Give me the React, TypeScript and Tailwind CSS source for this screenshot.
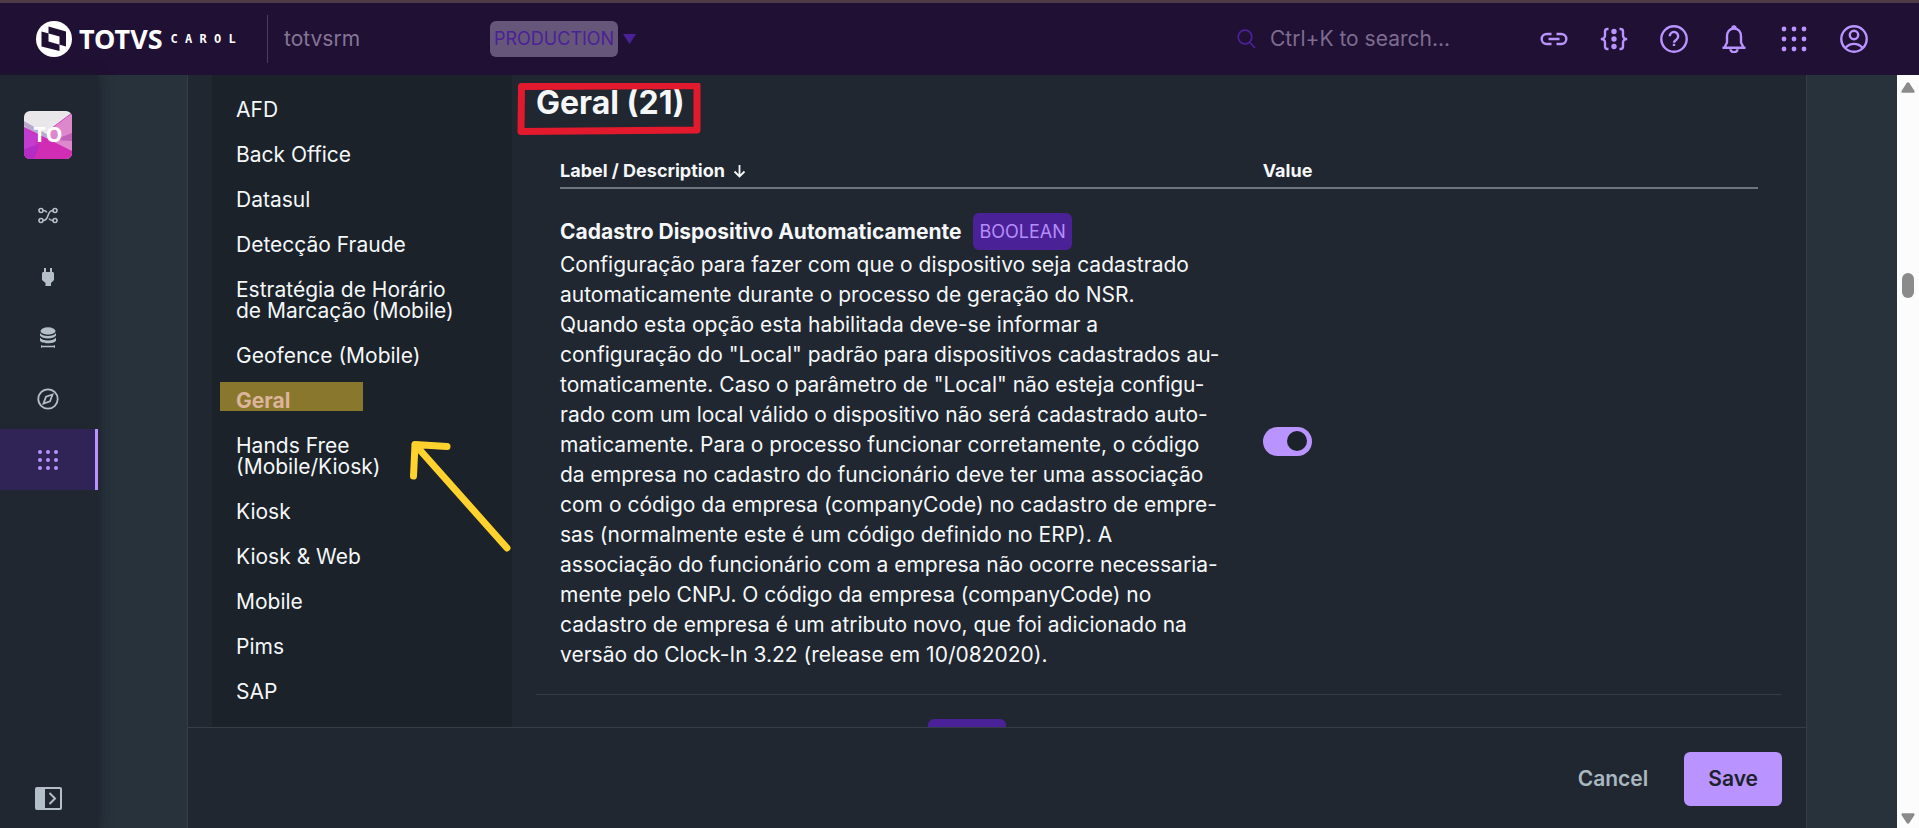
import { useState } from "react";
import type { ReactNode } from "react";

const groups = [
  "AFD",
  "Back Office",
  "Datasul",
  "Detecção Fraude",
  "Estratégia de Horário de Marcação (Mobile)",
  "Geofence (Mobile)",
  "Geral",
  "Hands Free (Mobile/Kiosk)",
  "Kiosk",
  "Kiosk & Web",
  "Mobile",
  "Pims",
  "SAP",
];

const description = [
  "Configuração para fazer com que o dispositivo seja cadastrado",
  "automaticamente durante o processo de geração do NSR.",
  "Quando esta opção esta habilitada deve-se informar a",
  'configuração do "Local" padrão para dispositivos cadastrados au-',
  'tomaticamente. Caso o parâmetro de "Local" não esteja configu-',
  "rado com um local válido o dispositivo não será cadastrado auto-",
  "maticamente. Para o processo funcionar corretamente, o código",
  "da empresa no cadastro do funcionário deve ter uma associação",
  "com o código da empresa (companyCode) no cadastro de empre-",
  "sas (normalmente este é um código definido no ERP). A",
  "associação do funcionário com a empresa não ocorre necessaria-",
  "mente pelo CNPJ. O código da empresa (companyCode) no",
  "cadastro de empresa é um atributo novo, que foi adicionado na",
  "versão do Clock-In 3.22 (release em 10/082020).",
];

function Dots({ size, gap, r }: { size: number; gap: number; r: number }) {
  const c = size / 2;
  return (
    <svg width={size} height={size} fill="currentColor" aria-hidden="true">
      {[-gap, 0, gap].map((y) =>
        [-gap, 0, gap].map((x) => <circle key={`${x}${y}`} cx={c + x} cy={c + y} r={r} />)
      )}
    </svg>
  );
}

function HeaderIcon({ children }: { children: ReactNode }) {
  return (
    <svg width="28" height="28" viewBox="0 0 28 28" fill="none" stroke="currentColor" strokeWidth="2.4" aria-hidden="true">
      {children}
    </svg>
  );
}

const headerActions = [
  {
    label: "Links",
    icon: (
      <HeaderIcon>
        <path d="M11.5 9H6.7a5 5 0 0 0 0 10h4.8M16.5 9h4.8a5 5 0 0 1 0 10h-4.8M8.5 14h11" />
      </HeaderIcon>
    ),
  },
  {
    label: "API",
    icon: (
      <HeaderIcon>
        <path d="M8.5 4H7.500A2.500 2.500 0 0 0 5 6.500v4A3.500 3.500 0 0 1 1 14a3.500 3.500 0 0 1 4 3.500v4A2.500 2.500 0 0 0 7.500 24h1M19.500 4h1A2.500 2.500 0 0 1 23 6.500v4a3.500 3.500 0 0 0 4 3.500 3.500 3.500 0 0 0-4 3.500v4a2.500 2.500 0 0 1-2.500 2.500h-1" />
        <g fill="currentColor" stroke="none">
          <circle cx="14" cy="6.5" r="2.7" />
          <circle cx="14" cy="14" r="2.7" />
          <circle cx="14" cy="21.5" r="2.7" />
        </g>
      </HeaderIcon>
    ),
  },
  {
    label: "Help",
    icon: (
      <HeaderIcon>
        <circle cx="14" cy="14" r="12.7" />
        <path d="M9.8 11.3a4.200 4.200 0 1 1 6.800 3.100c-1.700 1.200-2.600 1.700-2.600 3.400" />
        <path d="M14 18.8v2.200" />
      </HeaderIcon>
    ),
  },
  {
    label: "Notifications",
    icon: (
      <HeaderIcon>
        <path d="M2.500 22.800h23M4.500 22.500 7 17.500V11.500c0-4.600 2.500-8 7-8s7 3.400 7 8v6l2.500 5" />
        <path d="M12.500 3a1.500 1.500 0 0 1 3 0M10.500 24.200a3.500 3 0 0 0 7 0" />
      </HeaderIcon>
    ),
  },
  { label: "Apps", icon: <Dots size={28} gap={10} r={2.4} /> },
  {
    label: "Account",
    icon: (
      <HeaderIcon>
        <circle cx="14" cy="14" r="12.7" />
        <circle cx="14" cy="10" r="4.2" />
        <path d="M5.500 22.800c4.500-5.300 12.500-5.300 17 0" />
      </HeaderIcon>
    ),
  },
];

const sideItems = [
  {
    label: "Flows",
    icon: (
      <svg width="20" height="17" viewBox="0 0 20 17" fill="none" stroke="currentColor" strokeWidth="1.6">
        <circle cx="3" cy="3.5" r="2" />
        <circle cx="17" cy="3.5" r="2" />
        <circle cx="3" cy="13.5" r="2" />
        <circle cx="17" cy="13.5" r="2" />
        <path d="M5 13.500c7 0 3-10 10-10M5 3.500c2 0 3 .3 3.800 1.800M15 13.500c-2 0-3.300-.5-4-2" />
      </svg>
    ),
  },
  {
    label: "Connectors",
    icon: (
      <svg width="12" height="18" viewBox="0 0 12 18" fill="currentColor">
        <path d="M2 0h2v4h4V0h2v4h1l1 1v7l-3 3v3H3.500v-3L0 12V5l1-1h1z" />
      </svg>
    ),
  },
  {
    label: "Data",
    icon: (
      <svg width="16" height="22" viewBox="0 0 16 22" fill="currentColor">
        <ellipse cx="8" cy="4" rx="7.5" ry="3.7" />
        <path d="M0 6c2 4 14 4 16 0v2.500c-2 4-14 4-16 0z" />
        <path d="M0 10.500c2 4 14 4 16 0v3c-1 3.700-15 3.700-16 0z" />
        <path d="M1 18l1.500.800h11l1.500-.800v3l-1.500-.800h-11L1 21z" />
      </svg>
    ),
  },
  {
    label: "Explore",
    icon: (
      <svg width="22" height="22" viewBox="0 0 22 22" fill="none" stroke="currentColor" strokeWidth="1.8">
        <circle cx="11" cy="11" r="9.7" />
        <path d="M15.500 6.500 9 8.700 6.500 15.500 13 13.300z" />
      </svg>
    ),
  },
  { label: "Apps", icon: <Dots size={20} gap={8} r={2} /> },
];

function Logo() {
  return (
    <a href="#" className="flex w-[231px] items-center">
      <svg width="36" height="36" viewBox="0 0 36 36" aria-hidden="true">
        <circle cx="18" cy="18" r="18" fill="#fff" />
        <path
          fillRule="evenodd"
          fill="#201034"
          d="M12.500 5.500 30 10.500V25.500L12.500 20.500zM5.500 10.500 23.500 15.500V30L5.500 25.500z"
        />
      </svg>
      <span className="ml-[7px] font-['Noto_Sans',sans-serif] text-[27px] leading-9 font-bold">TOTVS</span>
      <span className="ml-2 font-['DejaVu_Sans_Mono',monospace] text-xs font-bold">C A R O L</span>
    </a>
  );
}

function Header() {
  return (
    <header className="flex h-[75px] shrink-0 items-center border-t-3 border-[#4e3b45] bg-[#201034] pr-[51px] pl-9 text-white">
      <Logo />
      <div className="flex h-12 w-[223px] items-center border-l border-[#4d3c62] pl-4 text-[21px] text-[#857696]">
        totvsrm
      </div>
      <button type="button" className="flex items-center gap-[5px] text-[#4b2197]">
        <span className="flex h-9 items-center rounded-md bg-[#665679] px-1 text-lg">PRODUCTION</span>
        <svg width="13" height="10" viewBox="0 0 13 10" fill="currentColor" aria-hidden="true">
          <path d="M0 0h13L6.500 10z" />
        </svg>
      </button>
      <label className="ml-auto flex items-center gap-3.5 text-[#4b2197]">
        <svg width="19" height="20" viewBox="0 0 19 20" fill="none" stroke="currentColor" strokeWidth="1.7" aria-hidden="true">
          <circle cx="8" cy="8" r="6.8" />
          <path d="M12.500 13 18 19" />
        </svg>
        <input
          type="text"
          aria-label="Search"
          placeholder="Ctrl+K to search..."
          className="w-[270px] bg-transparent text-[21px] outline-none placeholder:text-[#7d6c90]"
        />
      </label>
      <nav className="flex gap-8 text-[#b993ff]">
        {headerActions.map((a) => (
          <button key={a.label} type="button" aria-label={a.label}>
            {a.icon}
          </button>
        ))}
      </nav>
    </header>
  );
}

function Sidebar() {
  return (
    <aside className="relative z-10 flex w-[98px] shrink-0 flex-col bg-[#202730] text-[#b5bfc9] shadow-[2px_0_10px_rgba(24,28,40,0.7)]">
      <div className="relative mx-6 mt-9 flex size-12 items-center justify-center overflow-hidden rounded-md">
        <svg className="absolute inset-0" width="48" height="48" viewBox="0 0 48 48" aria-hidden="true">
          <path fill="#e9e7ea" d="M0 0h48v48H0z" />
          <path fill="#b9a9cf" d="M0 10 26 25 20 31 0 15z" />
          <path fill="#dd87cd" d="M48 2v46H20l4-28z" />
          <path fill="#d12db4" d="M0 16 48 40v8H0z" />
          <path fill="#c060b8" d="M30 29 48 22v8z" />
          <path fill="#c23cd0" d="M0 16 13 25 8 48H0z" />
          <path fill="#b42cc4" d="M0 38 16 33 10 48H0z" />
          <path fill="none" stroke="#cf43c0" d="M24 20 48 2" />
        </svg>
        <span className="relative font-['Open_Sans',sans-serif] text-[21px] font-bold text-white">TO</span>
      </div>
      <nav className="mt-[26px] flex flex-col">
        {sideItems.map((item, i) => (
          <a
            key={item.label}
            href="#"
            aria-label={item.label}
            className={
              i === 4
                ? "flex h-[61px] items-center justify-center border-r-3 border-[#b993ff] bg-[#302355] pl-px text-[#b993ff]"
                : "flex h-[61px] items-center justify-center pr-0.5"
            }
          >
            {item.icon}
          </a>
        ))}
      </nav>
      <button type="button" aria-label="Expand menu" className="mt-auto mb-[18px] flex justify-center pr-0.5">
        <svg width="27" height="23" viewBox="0 0 27 23" fill="none" stroke="currentColor" strokeWidth="2">
          <rect x="1" y="1" width="25" height="21" rx="1" />
          <path fill="currentColor" stroke="none" d="M1 1h9v21H1z" />
          <path d="m14.500 6 5.500 5.500-5.500 5.500" />
        </svg>
      </button>
    </aside>
  );
}

function GroupNav() {
  return (
    <nav className="relative w-[300px] shrink-0 self-stretch bg-[#1b2229] px-6 pt-3 text-[21px] leading-[21px]">
      {groups.map((group) =>
        group === "Geral" ? (
          <a key={group} href="#" className="relative block py-3 font-bold text-[#dcb49b]">
            <span className="absolute top-1 -left-4 h-[29px] w-[143px] bg-[#89772d]" />
            <span className="relative">{group}</span>
          </a>
        ) : (
          <a key={group} href="#" className="block max-w-[225px] py-3">
            {group}
          </a>
        )
      )}
      <svg className="absolute top-[360px] left-[196px]" width="106" height="122" viewBox="408 435 106 122" aria-hidden="true">
        <path
          d="M507 548 415 444.500 447 446.500M415 444.500 413.500 476"
          fill="none"
          stroke="#ffd22e"
          strokeWidth="7"
          strokeLinecap="round"
          strokeLinejoin="round"
        />
      </svg>
    </nav>
  );
}

function TypeBadge({ children }: { children: ReactNode }) {
  return (
    <span className="flex h-[37px] items-center rounded-md bg-[#4b2197] px-1.5 text-lg font-normal text-[#b58dfb]">
      {children}
    </span>
  );
}

function Settings() {
  const [enabled, setEnabled] = useState(true);

  return (
    <section className="min-w-0 flex-1 px-6 pt-2">
      <h2 className="relative text-[32px] leading-10 font-bold">
        Geral (21)
        <svg className="absolute top-0 -left-[19px]" width="184" height="54" viewBox="0 0 184 54" aria-hidden="true">
          <path d="M4.500 3.500 180 2.500V47L4 48.500z" fill="none" stroke="#e3192d" strokeWidth="7" strokeLinejoin="round" />
        </svg>
      </h2>
      <table className="mt-[34px] w-full table-fixed border-collapse text-left">
        <thead>
          <tr className="text-lg leading-7">
            <th className="w-[56.4%] p-0 pl-6 font-bold">
              <div className="flex items-center gap-2 border-b-2 border-[#6d7480] pb-0.5">
                Label / Description
                <svg width="13" height="14" viewBox="0 0 13 14" fill="none" stroke="currentColor" strokeWidth="1.8" aria-hidden="true">
                  <path d="M6.500 1v11M1.500 7.500l5 5 5-5" />
                </svg>
              </div>
            </th>
            <th className="p-0 pr-6 font-bold">
              <div className="border-b-2 border-[#6d7480] pb-0.5 pl-6">Value</div>
            </th>
          </tr>
        </thead>
        <tbody>
          <tr className="border-b border-[#333b45]">
            <td className="py-6 pl-6">
              <div className="flex items-center gap-3 text-[21px] font-bold">
                <span id="auto-register">Cadastro Dispositivo Automaticamente</span>
                <TypeBadge>BOOLEAN</TypeBadge>
              </div>
              <p className="text-[21px] leading-[30px] whitespace-pre">{description.join("\n")}</p>
            </td>
            <td className="px-6">
              <label className="relative block h-[29px] w-[49px]">
                <input
                  type="checkbox"
                  aria-labelledby="auto-register"
                  checked={enabled}
                  onChange={(e) => setEnabled(e.target.checked)}
                  className="peer block h-full w-full appearance-none rounded-full bg-[#6d7480] checked:bg-[#b993ff]"
                />
                <span className="pointer-events-none absolute top-1 left-1 size-5 rounded-full bg-[#1c2229] peer-checked:left-6" />
              </label>
            </td>
          </tr>
          <tr>
            <td className="py-6 pl-6">
              <div className="flex items-center gap-3 text-[21px] font-bold">
                <span>Data de corte / Dia(s) fechamentos</span>
                <TypeBadge>STRING</TypeBadge>
              </div>
            </td>
            <td />
          </tr>
        </tbody>
      </table>
    </section>
  );
}

function Scrollbar() {
  return (
    <div className="flex w-[22px] shrink-0 flex-col items-center bg-[#fcfcfc] pt-[7px] pb-1 text-[#8b8b8b]" aria-hidden="true">
      <svg width="14" height="11" viewBox="0 0 14 11" fill="currentColor">
        <path d="M5.500 1.200q1.500-1.800 3 0l5 7.800q.5 1.500-1 1.800h-11q-1.500-.3-1-1.800z" />
      </svg>
      <div className="mt-[180px] h-[25px] w-3 rounded-full bg-[#8b8b8b]" />
      <svg className="mt-auto" width="14" height="11" viewBox="0 0 14 11" fill="currentColor">
        <path d="M5.500 9.800q1.500 1.800 3 0l5-7.800q.5-1.500-1-1.800h-11q-1.500.3-1 1.800z" />
      </svg>
    </div>
  );
}

export default function App() {
  return (
    <div className="flex h-screen flex-col overflow-hidden bg-[#27323b] font-['Inter',sans-serif] text-[#f5f7f9]">
      <Header />
      <div className="flex min-h-0 flex-1">
        <Sidebar />
        <main className="mr-[90px] ml-[89px] flex min-w-0 flex-1 flex-col border-x border-[#353d47] bg-[#202730]">
          <div className="flex min-h-0 flex-1 items-start overflow-hidden pl-6">
            <GroupNav />
            <Settings />
          </div>
          <footer className="flex h-[101px] shrink-0 items-start justify-end gap-3 border-t border-[#353d47] px-6 pt-6 text-[21px] font-semibold">
            <button type="button" className="h-[54px] px-6 text-[#a9b7c0]">
              Cancel
            </button>
            <button type="button" className="h-[54px] rounded-md bg-[#b993ff] px-6 text-[#1c2229]">
              Save
            </button>
          </footer>
        </main>
        <Scrollbar />
      </div>
    </div>
  );
}
